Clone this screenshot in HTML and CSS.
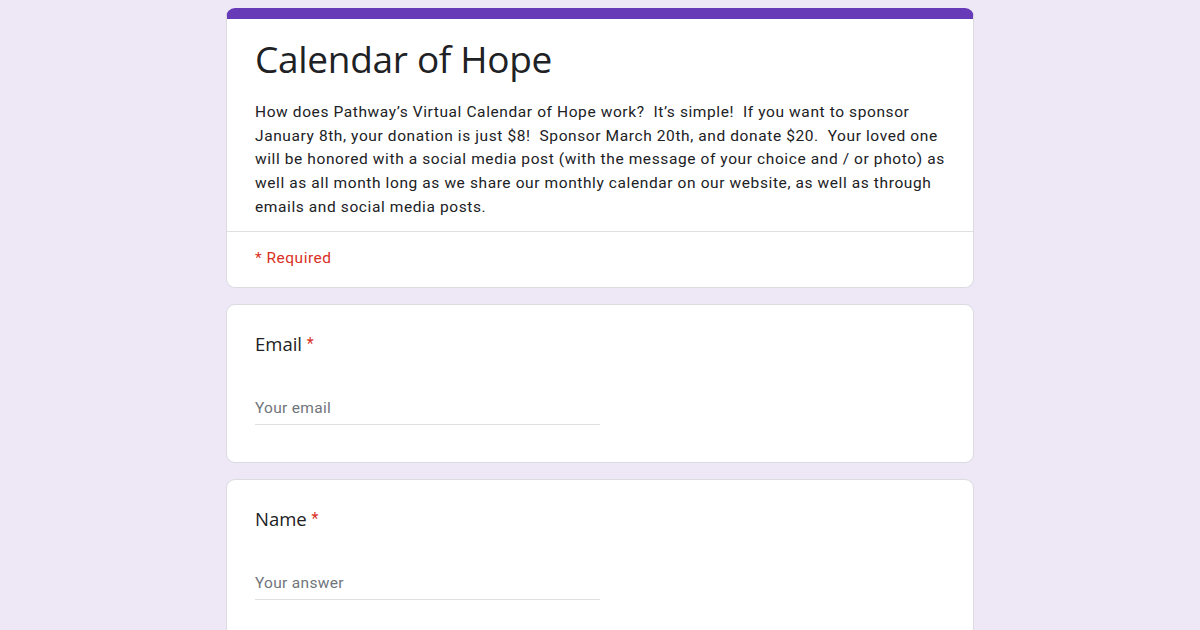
FILE: index.html
```html
<!DOCTYPE html>
<html>
<head>
<meta charset="utf-8">
<link rel="stylesheet" href="styles.css">
</head>
<body>
<div class="form">
  <div class="card header">
    <div class="header-main">
      <h1 class="title">Calendar of Hope</h1>
      <p class="desc">How does Pathway’s Virtual Calendar of Hope work?&nbsp; It’s simple!&nbsp; If you want to sponsor January 8th, your donation is just $8!&nbsp; Sponsor March 20th, and donate $20.&nbsp; Your loved one will be honored with a social media post (with the message of your choice and / or photo) as well as all month long as we share our monthly calendar on our website, as well as through emails and social media posts.</p>
    </div>
    <div class="required-note">* Required</div>
  </div>
  <div class="card question">
    <div class="q-label">Email <span class="star">*</span></div>
    <div class="q-input">Your email</div>
  </div>
  <div class="card question">
    <div class="q-label">Name <span class="star">*</span></div>
    <div class="q-input">Your answer</div>
  </div>
</div>
</body>
</html>
```
FILE: styles.css
```css
html, body {
  margin: 0;
  padding: 0;
  background: #ede7f6;
  height: 630px;
  overflow: hidden;
}
.form {
  width: 748px;
  margin: 0 auto;
  padding-top: 8px;
  display: flex;
  flex-direction: column;
  gap: 16px;
}
.card {
  background: #fff;
  border: 1px solid #dadce0;
  border-radius: 9px;
  box-sizing: border-box;
}
.header {
  border-top: 11px solid #673ab7;
}
.header-main {
  padding: 17px 25px 11px 28px;
  border-bottom: 1px solid #e0e0e0;
}
.title {
  margin: 0;
  font-family: "Open Sans", "Inter", sans-serif;
  font-weight: 400;
  font-size: 37px;
  line-height: 46px;
  color: #202124;
  letter-spacing: -0.3px;
}
.desc {
  margin: 19px 0 0;
  font-family: Roboto, "Liberation Sans", sans-serif;
  font-size: 15.5px;
  line-height: 23.7px;
  color: #202124;
  letter-spacing: 0.6px;
}
.required-note {
  padding: 15px 28px 18px;
  font-family: Roboto, "Liberation Sans", sans-serif;
  font-size: 15.5px;
  line-height: 22px;
  color: #d93025;
  letter-spacing: 0.5px;
}
.question {
  padding: 27px 28px 37px;
}
.q-label {
  font-family: "Open Sans", "Inter", sans-serif;
  font-size: 18.5px;
  line-height: 24px;
  color: #202124;
}
.star {
  color: #d93025;
  font-family: Roboto, "Liberation Sans", sans-serif;
  font-size: 16px;
  vertical-align: 2px;
}
.q-input {
  margin-top: 41px;
  width: 345px;
  font-family: Roboto, "Liberation Sans", sans-serif;
  font-size: 15.5px;
  line-height: 22px;
  color: #70757a;
  padding-bottom: 5px;
  border-bottom: 1px solid #e0e0e0;
  letter-spacing: 0.3px;
}
```
